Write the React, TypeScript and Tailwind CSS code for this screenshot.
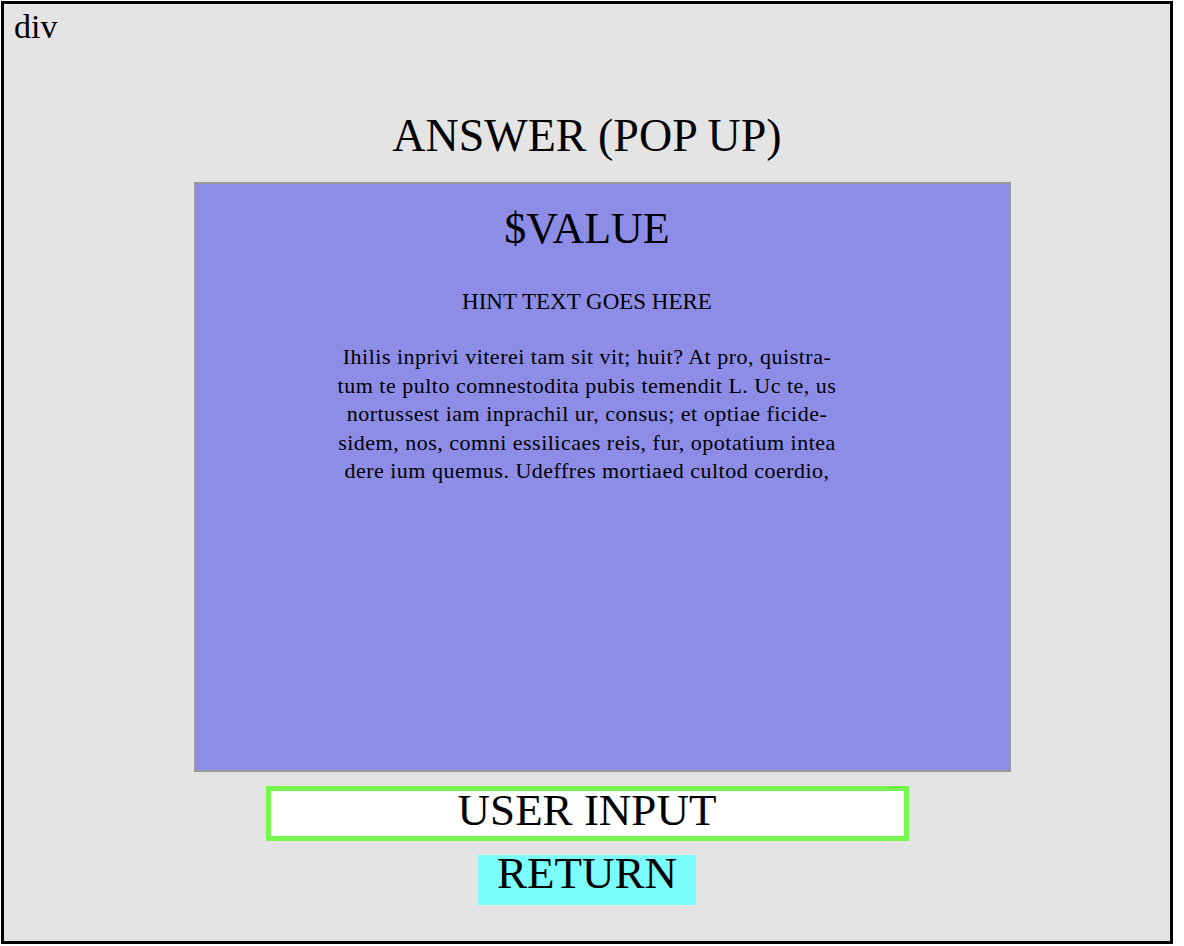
export default function App() {
  const lines = [
    "Ihilis inprivi viterei tam sit vit; huit? At pro, quistra-",
    "tum te pulto comnestodita pubis temendit L. Uc te, us",
    "nortussest iam inprachil ur, consus; et optiae ficide-",
    "sidem, nos, comni essilicaes reis, fur, opotatium intea",
    "dere ium quemus. Udeffres mortiaed cultod coerdio,",
  ];

  return (
    <div className="bg-white p-px font-['Liberation_Serif',serif] text-black">
      {/* outer wireframe frame */}
      <div className="w-[1172px] h-[943px] border-[3px] border-black bg-[#e4e4e4] flex flex-col">
        <div className="pt-[6px] pl-[10px] text-[34px] leading-[34px]">div</div>

        <h1 className="mt-[69px] text-center text-[46px] leading-[46px]">ANSWER (POP UP)</h1>

        {/* answer card */}
        <div className="mt-[23px] ml-[190px] w-[817px] h-[590px] border-2 border-[#9a9a9a] bg-[#8d8de8] pr-[31px] pt-[23px] flex flex-col items-center text-center">
          <div className="text-[44px] leading-[44px]">$VALUE</div>
          <div className="mt-[39px] text-[23px] leading-[23px]">HINT TEXT GOES HERE</div>
          <p className="mt-[30px] text-[22px] leading-[28.5px] tracking-[0.5px] whitespace-nowrap">
            {lines.map((l) => (
              <span key={l} className="block">
                {l}
              </span>
            ))}
          </p>
        </div>

        {/* user input */}
        <div className="mt-[14px] self-center w-[643px] h-[55px] border-[5px] border-[#77f84c] bg-white text-center text-[45px] leading-[38px]">
          USER INPUT
        </div>

        {/* return button */}
        <button className="mt-[14px] self-center w-[218px] h-[50px] bg-[#7bfdfc] text-[45px] leading-[36px] flex justify-center items-start">
          RETURN
        </button>
      </div>
    </div>
  );
}
